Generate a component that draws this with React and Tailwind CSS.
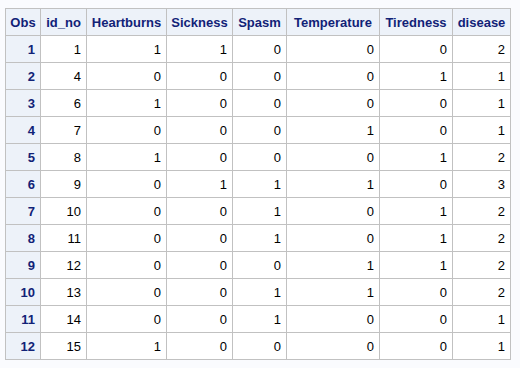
export default function App() {
  const headers = ["Obs", "id_no", "Heartburns", "Sickness", "Spasm", "Temperature", "Tiredness", "disease"];
  const widths = ["w-[35px]", "w-[46px]", "w-[80px]", "w-[66px]", "w-[54px]", "w-[93px]", "w-[73px]", "w-[58px]"];
  const rows = [
    [1, 1, 1, 1, 0, 0, 0, 2],
    [2, 4, 0, 0, 0, 0, 1, 1],
    [3, 6, 1, 0, 0, 0, 0, 1],
    [4, 7, 0, 0, 0, 1, 0, 1],
    [5, 8, 1, 0, 0, 0, 1, 2],
    [6, 9, 0, 1, 1, 1, 0, 3],
    [7, 10, 0, 0, 1, 0, 1, 2],
    [8, 11, 0, 0, 1, 0, 1, 2],
    [9, 12, 0, 0, 0, 1, 1, 2],
    [10, 13, 0, 0, 1, 1, 0, 2],
    [11, 14, 0, 0, 1, 0, 0, 1],
    [12, 15, 1, 0, 0, 0, 0, 1],
  ];
  return (
    <div className="w-[520px] h-[368px] bg-[#fafbfe] pt-[8px] pl-[5px] font-['Liberation_Sans',Arial,sans-serif] text-[13px]">
      <table className="border-collapse table-fixed w-[506px]">
        <colgroup>
          {widths.map((w, i) => (
            <col key={i} className={w} />
          ))}
        </colgroup>
        <thead>
          <tr className="h-[27px]">
            {headers.map((h) => (
              <th key={h} className="border border-[#c1c1c1] bg-[#edf2f9] text-[#112277] font-bold text-center px-[3px] p-0 leading-none whitespace-nowrap">
                {h}
              </th>
            ))}
          </tr>
        </thead>
        <tbody>
          {rows.map((r) => (
            <tr key={r[0]} className="h-[27px]">
              {r.map((v, i) =>
                i === 0 ? (
                  <th key={i} className="border border-[#c1c1c1] bg-[#edf2f9] text-[#112277] font-bold text-right pr-[5px] p-0 leading-none">
                    {v}
                  </th>
                ) : (
                  <td key={i} className="border border-[#c1c1c1] bg-white text-black text-right pr-[5px] p-0 leading-none">
                    {v}
                  </td>
                )
              )}
            </tr>
          ))}
        </tbody>
      </table>
    </div>
  );
}
